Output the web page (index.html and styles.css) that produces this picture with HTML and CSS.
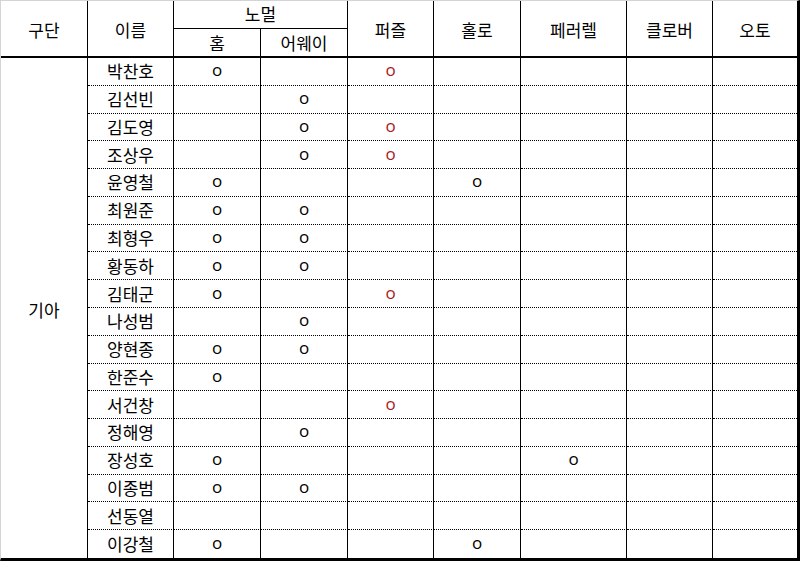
FILE: index.html
```html
<!DOCTYPE html>
<html lang="ko">
<head>
<meta charset="utf-8">
<title>기아 선수 목록</title>
<link rel="stylesheet" href="styles.css">
</head>
<body>
<div class="sheet">
  <div class="h h-team">구단</div>
  <div class="h h-name">이름</div>
  <div class="h h-normal">노멀</div>
  <div class="h h-puzzle">퍼즐</div>
  <div class="h h-holo">홀로</div>
  <div class="h h-parallel">페러렐</div>
  <div class="h h-clover">클로버</div>
  <div class="h h-auto last">오토</div>
  <div class="h h-home">홈</div>
  <div class="h h-away">어웨이</div>

  <div class="team">기아</div>

  <div class="c name">박찬호</div><div class="c"><span class="o">o</span></div><div class="c"></div><div class="c"><span class="o red">o</span></div><div class="c"></div><div class="c"></div><div class="c"></div><div class="c last"></div>
  <div class="c name">김선빈</div><div class="c"></div><div class="c"><span class="o">o</span></div><div class="c"></div><div class="c"></div><div class="c"></div><div class="c"></div><div class="c last"></div>
  <div class="c name">김도영</div><div class="c"></div><div class="c"><span class="o">o</span></div><div class="c"><span class="o red">o</span></div><div class="c"></div><div class="c"></div><div class="c"></div><div class="c last"></div>
  <div class="c name">조상우</div><div class="c"></div><div class="c"><span class="o">o</span></div><div class="c"><span class="o red">o</span></div><div class="c"></div><div class="c"></div><div class="c"></div><div class="c last"></div>
  <div class="c name">윤영철</div><div class="c"><span class="o">o</span></div><div class="c"></div><div class="c"></div><div class="c"><span class="o">o</span></div><div class="c"></div><div class="c"></div><div class="c last"></div>
  <div class="c name">최원준</div><div class="c"><span class="o">o</span></div><div class="c"><span class="o">o</span></div><div class="c"></div><div class="c"></div><div class="c"></div><div class="c"></div><div class="c last"></div>
  <div class="c name">최형우</div><div class="c"><span class="o">o</span></div><div class="c"><span class="o">o</span></div><div class="c"></div><div class="c"></div><div class="c"></div><div class="c"></div><div class="c last"></div>
  <div class="c name">황동하</div><div class="c"><span class="o">o</span></div><div class="c"><span class="o">o</span></div><div class="c"></div><div class="c"></div><div class="c"></div><div class="c"></div><div class="c last"></div>
  <div class="c name">김태군</div><div class="c"><span class="o">o</span></div><div class="c"></div><div class="c"><span class="o red">o</span></div><div class="c"></div><div class="c"></div><div class="c"></div><div class="c last"></div>
  <div class="c name">나성범</div><div class="c"></div><div class="c"><span class="o">o</span></div><div class="c"></div><div class="c"></div><div class="c"></div><div class="c"></div><div class="c last"></div>
  <div class="c name">양현종</div><div class="c"><span class="o">o</span></div><div class="c"><span class="o">o</span></div><div class="c"></div><div class="c"></div><div class="c"></div><div class="c"></div><div class="c last"></div>
  <div class="c name">한준수</div><div class="c"><span class="o">o</span></div><div class="c"></div><div class="c"></div><div class="c"></div><div class="c"></div><div class="c"></div><div class="c last"></div>
  <div class="c name">서건창</div><div class="c"></div><div class="c"></div><div class="c"><span class="o red">o</span></div><div class="c"></div><div class="c"></div><div class="c"></div><div class="c last"></div>
  <div class="c name">정해영</div><div class="c"></div><div class="c"><span class="o">o</span></div><div class="c"></div><div class="c"></div><div class="c"></div><div class="c"></div><div class="c last"></div>
  <div class="c name">장성호</div><div class="c"><span class="o">o</span></div><div class="c"></div><div class="c"></div><div class="c"></div><div class="c"><span class="o">o</span></div><div class="c"></div><div class="c last"></div>
  <div class="c name">이종범</div><div class="c"><span class="o">o</span></div><div class="c"><span class="o">o</span></div><div class="c"></div><div class="c"></div><div class="c"></div><div class="c"></div><div class="c last"></div>
  <div class="c name">선동열</div><div class="c"></div><div class="c"></div><div class="c"></div><div class="c"></div><div class="c"></div><div class="c"></div><div class="c last"></div>
  <div class="c name end">이강철</div><div class="c end"><span class="o">o</span></div><div class="c end"></div><div class="c end"></div><div class="c end"><span class="o">o</span></div><div class="c end"></div><div class="c end"></div><div class="c end last"></div>
</div>
</body>
</html>
```

FILE: styles.css
```css
* {
  box-sizing: border-box;
}

html, body {
  margin: 0;
  padding: 0;
  background: #ffffff;
}

body {
  width: 800px;
  height: 561px;
  overflow: hidden;
  font-family: "Noto Sans CJK KR", "Noto Sans", sans-serif;
  font-size: 17px;
  color: #000000;
}

.sheet {
  display: grid;
  grid-template-columns: 87px 86px 87px 87px 86px 87px 106px 86px 84px;
  grid-template-rows: 28px 29px repeat(18, 1fr);
  width: 800px;
  height: 561px;
  border-top: 1px solid #d4d4d4;
  border-left: 1px solid #d4d4d4;
  border-right: 3px solid #000000;
  border-bottom: 3px solid #000000;
  background: #ffffff;
}

.h,
.c,
.team {
  display: flex;
  align-items: center;
  justify-content: center;
  border-right: 1px solid #000000;
  line-height: 1;
  white-space: nowrap;
}

.h {
  border-bottom: 2px solid #000000;
  padding-top: 1px;
}

.h-team,
.h-name,
.h-puzzle,
.h-holo,
.h-parallel,
.h-clover,
.h-auto {
  grid-row: 1 / 3;
}

.h-normal {
  grid-column: 3 / 5;
  border-bottom: 1px solid #000000;
  padding-top: 0;
  padding-bottom: 3px;
}

.h-home,
.h-away {
  grid-row: 2;
  padding-top: 0;
  padding-bottom: 1px;
}

.h-home {
  grid-column: 3;
}

.h-away {
  grid-column: 4;
}

.team {
  grid-column: 1;
  grid-row: 3 / 21;
  padding-top: 2px;
}

.c {
  border-bottom: 1px dotted #000000;
}

.c.end {
  border-bottom: none;
}

.last {
  border-right: none;
}

.name {
  padding-bottom: 1px;
}

.o {
  font-family: "Open Sans", "Liberation Sans", sans-serif;
  font-weight: 400;
  font-size: 17px;
  line-height: 1;
  padding-bottom: 3px;
  color: #000000;
}

.o.red {
  color: #a81c1c;
}
```
